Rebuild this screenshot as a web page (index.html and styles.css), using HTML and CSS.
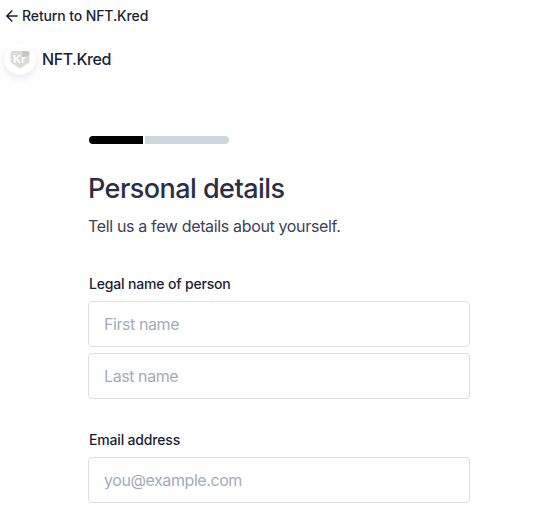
FILE: index.html
```
<!DOCTYPE html>
<html lang="en">
<head>
    <meta charset="UTF-8">
    <meta name="viewport" content="width=device-width, initial-scale=1.0">
    <title>Personal details</title>
    <link rel="stylesheet" href="styles.css">
</head>
<body>
    <header>
        <a class="return" href="#">
            <svg width="12" height="12" viewBox="0 0 12 12" fill="none" stroke="currentColor" stroke-width="1.5" stroke-linecap="round" stroke-linejoin="round">
                <path d="M11.200 6H1M5.800 1L.8 6l5 5"/>
            </svg>
            <span>Return to NFT.Kred</span>
        </a>
        <div class="brand">
            <div class="logo">
                <svg width="20" height="20" viewBox="0 0 20 20">
                    <path d="M2.500 2h15a2 2 0 0 1 2 2v7.500q0 2-1.600 3L10 19.500 2.100 14.500Q.5 13.500.5 11.500V4a2 2 0 0 1 2-2z" fill="#d9dbd6"/>
                    <path d="M12 2h5.500a2 2 0 0 1 2 2v2L12 9z" fill="#c6c9c3"/>
                    <text x="3" y="13.500" class="logo-text">Kr</text>
                </svg>
            </div>
            <span class="brand-name">NFT.Kred</span>
        </div>
    </header>
    <main>
        <div class="progress">
            <div class="done"></div>
            <div class="left"></div>
        </div>
        <h1>Personal details</h1>
        <p>Tell us a few details about yourself.</p>
        <form>
            <div class="field">
                <label for="first-name">Legal name of person</label>
                <input type="text" id="first-name" placeholder="First name">
                <input type="text" id="last-name" placeholder="Last name">
            </div>
            <div class="field">
                <label for="email">Email address</label>
                <input type="email" id="email" placeholder="you@example.com">
            </div>
        </form>
    </main>
</body>
</html>
```
FILE: styles.css
```
* {
    box-sizing: border-box;
}

body {
    margin: 0;
    background-color: #ffffff;
    color: #1a1f36;
    font-family: Inter, "Liberation Sans", sans-serif;
    overflow: hidden;
}

header {
    padding: 6px 0 0 4px;
}

.return {
    display: flex;
    align-items: center;
    gap: 4px;
    padding-left: 2px;
    height: 20px;
    color: #1a1f36;
    font-size: 14px;
    font-weight: 500;
    letter-spacing: -0.11px;
    text-decoration: none;
}

.return span {
    padding-bottom: 2px;
}

.brand {
    display: flex;
    align-items: center;
    gap: 6px;
    margin-top: 17px;
}

.logo {
    display: flex;
    align-items: center;
    justify-content: center;
    width: 32px;
    height: 32px;
    border-radius: 50%;
    background-color: #ffffff;
    box-shadow: 0 3px 7px rgba(60, 66, 87, 0.12);
}

.logo-text {
    fill: #ffffff;
    font-size: 11px;
    font-weight: 700;
}

.brand-name {
    font-size: 16px;
    font-weight: 500;
    letter-spacing: -0.45px;
}

main {
    width: 382px;
    margin: 61px 0 0 88px;
}

.progress {
    display: flex;
    gap: 2px;
    width: 140px;
    height: 8px;
    margin-left: 1px;
    border-radius: 4px;
    overflow: hidden;
}

.done {
    width: 54px;
    background-color: #000000;
}

.left {
    flex: 1;
    background-color: #cfd7df;
}

h1 {
    margin: 28px 0 0;
    color: #2a2f45;
    font-size: 27px;
    font-weight: 500;
    line-height: 34px;
    letter-spacing: -0.55px;
}

p {
    margin: 8px 0 0;
    color: #3c4257;
    font-size: 16px;
    line-height: 24px;
    letter-spacing: -0.35px;
}

.field {
    display: flex;
    flex-direction: column;
    gap: 6px;
    margin-bottom: 31px;
}

form {
    margin-top: 36px;
}

label {
    padding: 0 0 1px 1px;
    font-size: 14px;
    font-weight: 500;
    line-height: 20px;
    letter-spacing: -0.17px;
}

input {
    width: 100%;
    height: 46px;
    padding: 0 15px;
    border: 1px solid #dddee1;
    border-radius: 4px;
    background-color: #ffffff;
    font-family: inherit;
    font-size: 16px;
    letter-spacing: -0.42px;
}

input::placeholder {
    color: #a3acb9;
    opacity: 1;
}
```
